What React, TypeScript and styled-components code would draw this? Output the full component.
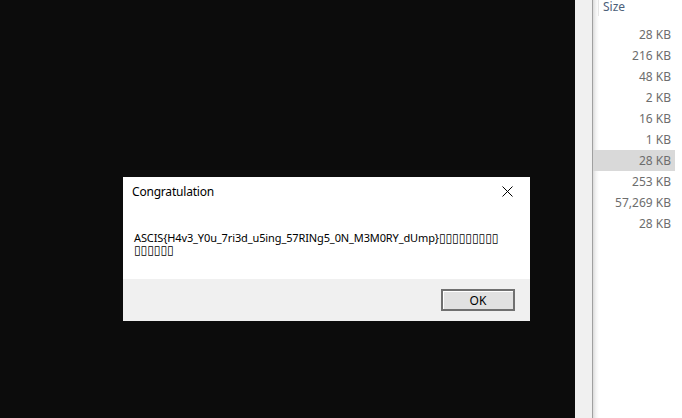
import React from "react";
import styled, { createGlobalStyle } from "styled-components";

const Global = createGlobalStyle`
  html, body { margin: 0; padding: 0; }
  body { width: 682px; height: 418px; overflow: hidden; background: #0c0c0c; font-family: "Noto Sans", "Open Sans", sans-serif; }
  #root { width: 682px; height: 418px; }
`;

const Screen = styled.div`
  display: flex;
  width: 682px;
  height: 418px;
`;

const Desktop = styled.div`
  position: relative;
  width: 575px;
  height: 100%;
  background: #0c0c0c;
`;

const Dialog = styled.div`
  position: absolute;
  left: 123px;
  top: 177px;
  width: 407px;
  height: 144px;
  display: flex;
  flex-direction: column;
  background: #ffffff;
  box-sizing: border-box;
`;

const TitleBar = styled.div`
  height: 29px;
  display: flex;
  align-items: center;
  justify-content: space-between;
  padding: 0 8px 0 9px;
  font-size: 12px;
  letter-spacing: -0.2px;
  color: #000;
`;

const Close = styled.div`
  width: 30px;
  height: 29px;
  display: flex;
  align-items: center;
  justify-content: center;
`;

const Body = styled.div`
  flex: 1;
  padding: 26px 11px 0 11px;
  font-size: 11px;
  letter-spacing: -0.12px;
  line-height: 12px;
  color: #000;
  white-space: nowrap;
`;

const Line = styled.div`
  height: 12px;
  line-height: 12px;
`;

const Tofu = styled.span`
  font-family: "DejaVu Sans", sans-serif;
  font-size: 12px;
  line-height: 12px;
  letter-spacing: 0;
`;

const Footer = styled.div`
  height: 42px;
  background: #f0f0f0;
  display: flex;
  align-items: center;
  justify-content: flex-end;
  padding-right: 15px;
`;

const Button = styled.div`
  width: 74px;
  height: 22px;
  box-sizing: border-box;
  border: 2px solid #707070;
  box-shadow: inset 1px 1px 0 #ffffff;
  background: #e1e1e1;
  display: flex;
  align-items: center;
  justify-content: center;
  font-size: 12px;
  color: #000;
`;

const Strip = styled.div`
  width: 17px;
  height: 100%;
  background: #f0f0f0;
  border-right: 1px solid #a0a0a0;
`;

const List = styled.div`
  flex: 1;
  height: 100%;
  background: linear-gradient(to right, #dcdcdc 0px, #f4f4f4 3px, #ffffff 6px);
  display: flex;
  flex-direction: column;
`;

const Header = styled.div`
  height: 14px;
  display: flex;
  align-items: flex-start;
  font-size: 12px;
  color: #4c607a;
`;

const HeaderDivider = styled.div`
  width: 1px;
  height: 16px;
  margin-left: 5px;
  background: #e5e5e5;
`;

const HeaderLabel = styled.div`
  margin-left: 4px;
  line-height: 13px;
`;

const Rows = styled.div`
  display: flex;
  flex-direction: column;
  padding-top: 10px;
`;

const Row = styled.div<{ $selected?: boolean }>`
  height: 21px;
  display: flex;
  align-items: center;
  justify-content: flex-end;
  width: 82px;
  padding-right: 4px;
  box-sizing: border-box;
  font-size: 12px;
  color: #6d6d6d;
  background: ${(p) => (p.$selected ? "#d9d9d9" : "transparent")};
`;

const sizes = ["28 KB", "216 KB", "48 KB", "2 KB", "16 KB", "1 KB", "28 KB", "253 KB", "57,269 KB", "28 KB"];

export default function App() {
  return (
    <>
      <Global />
      <Screen>
        <Desktop>
          <Dialog>
            <TitleBar>
              <span>Congratulation</span>
              <Close>
                <svg width="11" height="11" viewBox="0 0 11 11">
                  <path d="M0.5 0.5 L10.5 10.5 M10.5 0.5 L0.5 10.5" stroke="#000" strokeWidth="1" />
                </svg>
              </Close>
            </TitleBar>
            <Body>
              <Line>
                ASCIS{"{"}H4v3_Y0u_7ri3d_u5ing_57RINg5_0N_M3M0RY_dUmp{"}"}
                <Tofu>▯▯▯▯▯▯▯▯▯</Tofu>
              </Line>
              <Line>
                <Tofu>▯▯▯▯▯▯</Tofu>
              </Line>
            </Body>
            <Footer>
              <Button>OK</Button>
            </Footer>
          </Dialog>
        </Desktop>
        <Strip />
        <List>
          <Header>
            <HeaderDivider />
            <HeaderLabel>Size</HeaderLabel>
          </Header>
          <Rows>
            {sizes.map((s, i) => (
              <Row key={i} $selected={i === 6}>
                {s}
              </Row>
            ))}
          </Rows>
        </List>
      </Screen>
    </>
  );
}
